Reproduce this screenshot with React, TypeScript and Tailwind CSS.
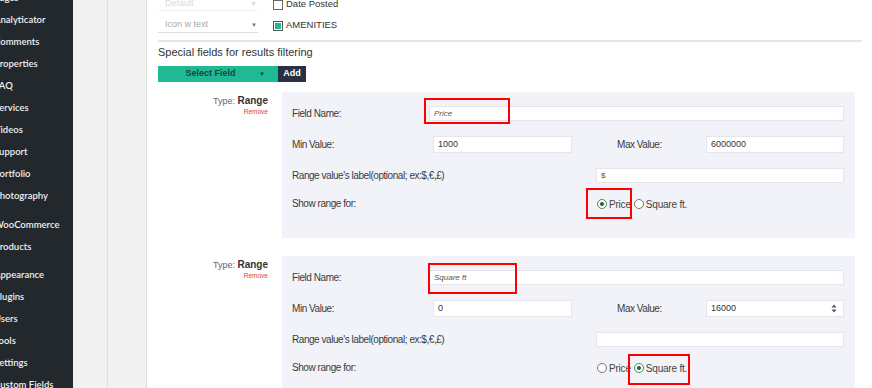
import React from "react";

const menuTop = ["Pages", "Analyticator", "Comments", "Properties", "FAQ", "Services", "Videos", "Support", "Portfolio", "Photography"];
const menuShop = ["WooCommerce", "Products"];
const menuAdmin = ["Appearance", "Plugins", "Users", "Tools", "Settings", "Custom Fields"];

const label = "text-[10px] tracking-[-0.45px] text-[#3a3a3a] leading-none";
const box = "h-[15px] bg-white border border-[#e4e6ec] flex items-center px-[4px] text-[9px] text-[#333]";

function MenuItem({ text }: { text: string }) {
  return (
    <div className="h-[22px] leading-[22px] -ml-[6px] whitespace-nowrap text-[9.5px] font-semibold text-[#eef0f2]">
      {text}
    </div>
  );
}

function Radio({ checked, text }: { checked?: boolean; text: string }) {
  return (
    <span className="flex items-center gap-[2px]">
      <span
        className={`flex h-[10px] w-[10px] items-center justify-center rounded-full border bg-white ${
          checked ? "border-[#3f8f5a]" : "border-[#777]"
        }`}
      >
        {checked && <span className="h-[4px] w-[4px] rounded-full bg-[#1f5f35]" />}
      </span>
      <span className="text-[10px] tracking-[-0.2px] text-[#444]">{text}</span>
    </span>
  );
}

function RangeField({
  name,
  min,
  max,
  unit,
  showFor,
  nameBox,
  radioBox,
  spinner,
}: {
  name: string;
  min: string;
  max: string;
  unit: string;
  showFor: "price" | "sqft";
  nameBox: string;
  radioBox: string;
  spinner?: boolean;
}) {
  return (
    <div className="flex">
      <div className="w-[124px] shrink-0 pr-[14px] pt-[1px] text-right">
        <div className="leading-[12px]">
          <span className="text-[9px] text-[#666]">Type: </span>
          <span className="text-[10px] font-bold text-[#333]">Range</span>
        </div>
        <div className="text-[6.5px] leading-[10px] text-[#e53935]">Remove</div>
      </div>
      <div className="mr-[7px] flex-1 bg-[#f2f3f8] pl-[10px] pr-[11px] pt-[14px] pb-[27px]">
        <div className="flex items-center">
          <span className={`w-[137px] shrink-0 ${label}`}>Field Name:</span>
          <div className={`relative flex-1 ${box}`}>
            <span className="text-[8px] italic text-[#555]">{name}</span>
            <span className={`pointer-events-none absolute border-2 border-[#f00] ${nameBox}`} />
          </div>
        </div>
        <div className="mt-[15px] flex items-center">
          <span className={`w-[141px] shrink-0 ${label}`}>Min Value:</span>
          <div className={`w-[139px] !h-[17px] ${box}`}>{min}</div>
          <span className={`ml-[45px] w-[89px] shrink-0 ${label}`}>Max Value:</span>
          <div className={`flex-1 !h-[17px] justify-between ${box}`}>
            <span>{max}</span>
            {spinner && (
              <svg width="6" height="9" viewBox="0 0 6 9" className="mr-[2px]">
                <path d="M3 0.5L5.5 3.5H0.5Z" fill="#555" />
                <path d="M3 8.5L5.5 5.5H0.5Z" fill="#555" />
              </svg>
            )}
          </div>
        </div>
        <div className="mt-[15px] flex items-center">
          <span className={`w-[304px] shrink-0 ${label}`}>Range value's label(optional; ex:$,€,£)</span>
          <div className={`flex-1 ${box}`}>
            <span className="text-[8px] text-[#555]">{unit}</span>
          </div>
        </div>
        <div className="mt-[14px] flex h-[14px] items-center">
          <span className={`w-[305px] shrink-0 ${label}`}>Show range for:</span>
          <div className="relative flex items-center gap-[3px]">
            <Radio checked={showFor === "price"} text="Price" />
            <Radio checked={showFor === "sqft"} text="Square ft." />
            <span className={`pointer-events-none absolute border-2 border-[#f00] ${radioBox}`} />
          </div>
        </div>
      </div>
    </div>
  );
}

export default function App() {
  return (
    <div className="flex h-[388px] w-[872px] overflow-hidden bg-white font-['Liberation_Sans',Arial,sans-serif]">
      <aside className="w-[73px] shrink-0 overflow-hidden bg-[#23282d] font-['Lato','Open_Sans',sans-serif]">
        <div className="-mt-[13px]">
          {menuTop.map((m) => (
            <MenuItem key={m} text={m} />
          ))}
          <div className="mt-[7px]">
            {menuShop.map((m) => (
              <MenuItem key={m} text={m} />
            ))}
          </div>
          <div className="mt-[6px]">
            {menuAdmin.map((m) => (
              <MenuItem key={m} text={m} />
            ))}
          </div>
        </div>
      </aside>
      <div className="flex w-[74px] shrink-0 bg-[#f1f1f1]">
        <div className="w-[34px]" />
        <div className="flex-1 border-l border-[#dedede] border-r" />
      </div>
      <main className="flex-1 pl-[11px] pr-[10px]">
        <div className="-mt-[6px]">
          <div className="flex h-[21px] items-center">
            <div className="flex h-[13px] w-[100px] items-center justify-between border-b border-[#f0f0f0] pl-[7px] pr-[1px] text-[9px] text-[#d8d8d8]">
              <span>Default</span>
              <span className="text-[7px]">▼</span>
            </div>
            <div className="ml-[15px] flex items-center gap-[3px]">
              <span className="h-[10px] w-[10px] border border-[#666] bg-white" />
              <span className="text-[9.5px] text-[#333]">Date Posted</span>
            </div>
          </div>
          <div className="flex h-[21px] items-center">
            <div className="flex h-[15px] w-[100px] items-center justify-between border-b border-[#ddd] pl-[7px] pr-[1px] text-[9px] text-[#aaa]">
              <span>Icon w text</span>
              <span className="text-[6px] text-[#777]">▼</span>
            </div>
            <div className="ml-[15px] flex items-center gap-[3px]">
              <span className="flex h-[10px] w-[10px] items-center justify-center border border-[#555] bg-white">
                <span className="h-[6px] w-[6px] bg-[#1fba93]" />
              </span>
              <span className="text-[9.5px] text-[#333]">AMENITIES</span>
            </div>
          </div>
        </div>
        <div className="mt-[4px] h-[2px] bg-[#e6e6e6]" />
        <h2 className="mt-[4px] text-[11px] leading-[13px] text-[#333]">Special fields for results filtering</h2>
        <div className="mt-[7px] flex h-[16px]">
          <div className="flex w-[120px] items-center bg-[#1fba93] text-[9px] font-semibold text-[#1e3e38]">
            <span className="flex-1 pl-[4px] text-center">Select Field</span>
            <span className="pr-[13px] text-[6px]">▼</span>
          </div>
          <div className="flex w-[28px] items-center justify-center bg-[#273142] text-[9px] font-semibold text-white">Add</div>
        </div>
        <div className="mt-[10px]">
          <RangeField
            name="Price"
            min="1000"
            max="6000000"
            unit="$"
            showFor="price"
            nameBox="-left-[6px] -top-[9px] w-[86px] h-[26px]"
            radioBox="-left-[11px] -top-[9px] w-[46px] h-[31px]"
          />
        </div>
        <div className="mt-[18px]">
          <RangeField
            name="Square ft"
            min="0"
            max="16000"
            unit=""
            showFor="sqft"
            nameBox="-left-[2px] -top-[8px] w-[89px] h-[31px]"
            radioBox="left-[31px] -top-[7px] w-[62px] h-[31px]"
            spinner
          />
        </div>
      </main>
    </div>
  );
}
